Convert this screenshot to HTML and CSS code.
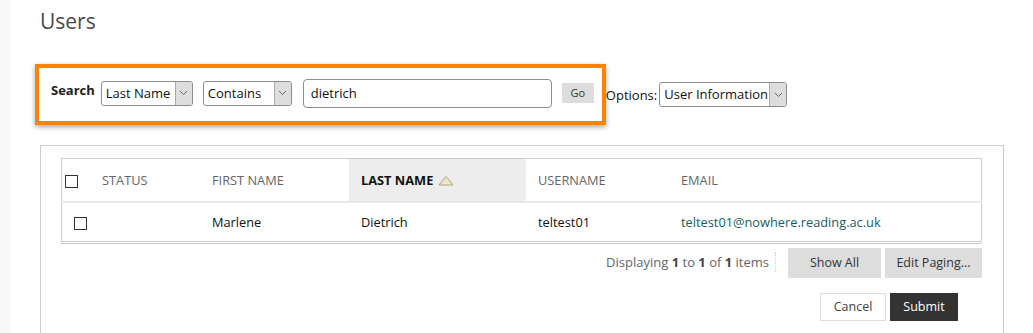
FILE: index.html
```html
<!DOCTYPE html>
<html>
<head>
<title>Users</title>
<meta charset="UTF-8">
<link rel="stylesheet" href="styles.css">
</head>
<body>
  <div class="side-strip"></div>
  <div class="page">
    <h1 class="page-title">Users</h1>

    <div class="search-row">
      <div class="search-box">
        <span class="search-label">Search</span>
        <span class="select select-field">
          <span class="select-text">Last Name</span>
          <span class="select-arrow"><svg width="9" height="6" viewBox="0 0 9 6"><path d="M1 1 L4.5 4.5 L8 1" fill="none" stroke="#666" stroke-width="1"/></svg></span>
        </span>
        <span class="select select-op">
          <span class="select-text">Contains</span>
          <span class="select-arrow"><svg width="9" height="6" viewBox="0 0 9 6"><path d="M1 1 L4.5 4.5 L8 1" fill="none" stroke="#666" stroke-width="1"/></svg></span>
        </span>
        <span class="search-input">dietrich</span>
        <span class="go-button">Go</span>
      </div>
      <span class="options-label">Options:</span>
      <span class="select select-options">
        <span class="select-text">User Information</span>
        <span class="select-arrow"><svg width="9" height="6" viewBox="0 0 9 6"><path d="M1 1 L4.5 4.5 L8 1" fill="none" stroke="#666" stroke-width="1"/></svg></span>
      </span>
    </div>

    <div class="list-container">
      <table class="users-table">
        <thead>
          <tr>
            <th class="col-check"><span class="checkbox head-check"></span></th>
            <th class="col-status">Status</th>
            <th class="col-first">First Name</th>
            <th class="col-last sorted">Last Name <svg class="sort-icon" width="16" height="11" viewBox="0 0 16 11"><path d="M1 10 L8 1.5 L15 10 Z" fill="#efe6cc" stroke="#b0a27a" stroke-width="1"/></svg></th>
            <th class="col-user">Username</th>
            <th class="col-email">Email</th>
          </tr>
        </thead>
        <tbody>
          <tr>
            <td class="col-check"><span class="checkbox row-check"></span></td>
            <td></td>
            <td>Marlene</td>
            <td>Dietrich</td>
            <td>teltest01</td>
            <td class="email">teltest01@nowhere.reading.ac.uk</td>
          </tr>
        </tbody>
      </table>

      <div class="paging">
        <span class="paging-count">Displaying <b>1</b> to <b>1</b> of <b>1</b> items</span>
        <span class="paging-button show-all">Show All</span>
        <span class="paging-button edit-paging">Edit Paging...</span>
      </div>

      <div class="submit-row">
        <span class="cancel-button">Cancel</span>
        <span class="submit-button">Submit</span>
      </div>
    </div>
  </div>
</body>
</html>
```

FILE: styles.css
```css
body {
  margin: 0;
  font-family: "Open Sans", "Liberation Sans", sans-serif;
  font-size: 13px;
  color: #333;
  background: #fff;
  display: flex;
  min-height: 333px;
  overflow: hidden;
}
.side-strip {
  width: 10px;
  background-color: #f8f8f8;
  flex-shrink: 0;
}
.page {
  flex: 1;
  padding-left: 25px;
}
.page-title {
  margin: 7px 0 0 5px;
  font-size: 21px;
  font-weight: 400;
  color: #4a4a4a;
  line-height: 28px;
}

/* Barra de busca */
.search-row {
  display: flex;
  align-items: center;
  margin-top: 29px;
}
.search-box {
  display: flex;
  align-items: center;
  border: 4px solid #ff8200;
  box-shadow: 0 2px 5px rgba(0,0,0,0.35);
  height: 50px;
  padding: 0 8px 3px 12px;
  box-sizing: content-box;
}
.search-label {
  font-weight: bold;
  color: #222;
  margin-right: 6px;
  margin-top: -6px;
}
.select {
  display: inline-flex;
  align-items: stretch;
  height: 23px;
  border: 1px solid #8d8d8d;
  border-radius: 3px;
  background: #fff;
  box-sizing: content-box;
  overflow: hidden;
}
.select-text {
  flex: 1;
  padding-left: 4px;
  line-height: 23px;
  font-size: 13px;
  color: #111;
  white-space: nowrap;
}
.select-arrow {
  width: 16px;
  border-left: 1px solid #aaa;
  background: #ddd;
  display: flex;
  align-items: center;
  justify-content: center;
}
.select-field { width: 90px; }
.select-op { width: 87px; margin-left: 10px; }
.search-input {
  width: 240px;
  height: 27px;
  line-height: 27px;
  margin-left: 11px;
  padding-left: 7px;
  border: 1px solid #8d8d8d;
  border-radius: 4px;
  font-size: 13px;
  color: #111;
}
.go-button {
  margin-left: 10px;
  width: 32px;
  height: 20px;
  line-height: 20px;
  text-align: center;
  background: #ddd;
  font-size: 11px;
  color: #333;
}
.options-label {
  font-size: 13px;
  color: #111;
}
.select-options { width: 126px; margin-left: 2px; }

/* Lista */
.list-container {
  margin: 20px 0 0 5px;
  width: 921px;
  border: 1px solid #ccc;
  border-bottom: none;
  padding: 12px 21px 20px 20px;
}
.users-table {
  width: 100%;
  table-layout: fixed;
  border-collapse: collapse;
  border: 1px solid #ccc;
  border-bottom: 3px double #ccc;
}
.users-table th {
  height: 42px;
  text-align: left;
  font-weight: 400;
  font-size: 12.8px;
  color: #666;
  text-transform: uppercase;
  padding: 0 0 0 12px;
  border-bottom: 2px solid #e8e8e8;
}
.users-table td {
  height: 38px;
  padding: 0 0 0 12px;
  color: #111;
  font-size: 12.8px;
}
.users-table .col-check { width: 28px; padding-left: 0; }
.col-status { width: 98px; }
.col-first { width: 137px; }
.col-last { width: 165px; }
.col-user { width: 131px; }
.users-table th.sorted {
  background: #ededed;
  color: #111;
  font-weight: bold;
}
.sort-icon { vertical-align: -1px; margin-left: 1px; }
.checkbox {
  display: inline-block;
  width: 11px;
  height: 11px;
  border: 1px solid #333;
  background: #fff;
  vertical-align: middle;
}
.head-check { margin-left: 3px; }
.row-check { margin-left: 12px; }
.users-table td.email { color: #17605f; }

/* Paginação */
.paging {
  display: flex;
  justify-content: flex-end;
  align-items: center;
  margin-top: 4px;
}
.paging-count {
  color: #666;
  padding-right: 6px;
  border-right: 1px dotted #ccc;
  margin-right: 12px;
  line-height: 20px;
  margin-top: -2px;
}
.paging-count b { color: #444; }
.paging-button {
  height: 30px;
  line-height: 30px;
  background: #ddd;
  text-align: center;
  color: #333;
  font-size: 12.5px;
}
.show-all { width: 93px; }
.edit-paging { width: 97px; margin-left: 4px; }

.submit-row {
  display: flex;
  justify-content: flex-end;
  margin-top: 15px;
  padding-right: 24px;
}
.cancel-button, .submit-button {
  height: 28px;
  line-height: 28px;
  text-align: center;
  font-size: 12.5px;
}
.cancel-button {
  width: 64px;
  border: 1px solid #ddd;
  height: 26px;
  line-height: 26px;
  color: #444;
}
.submit-button {
  width: 68px;
  margin-left: 4px;
  background: #333;
  color: #fff;
}
```
